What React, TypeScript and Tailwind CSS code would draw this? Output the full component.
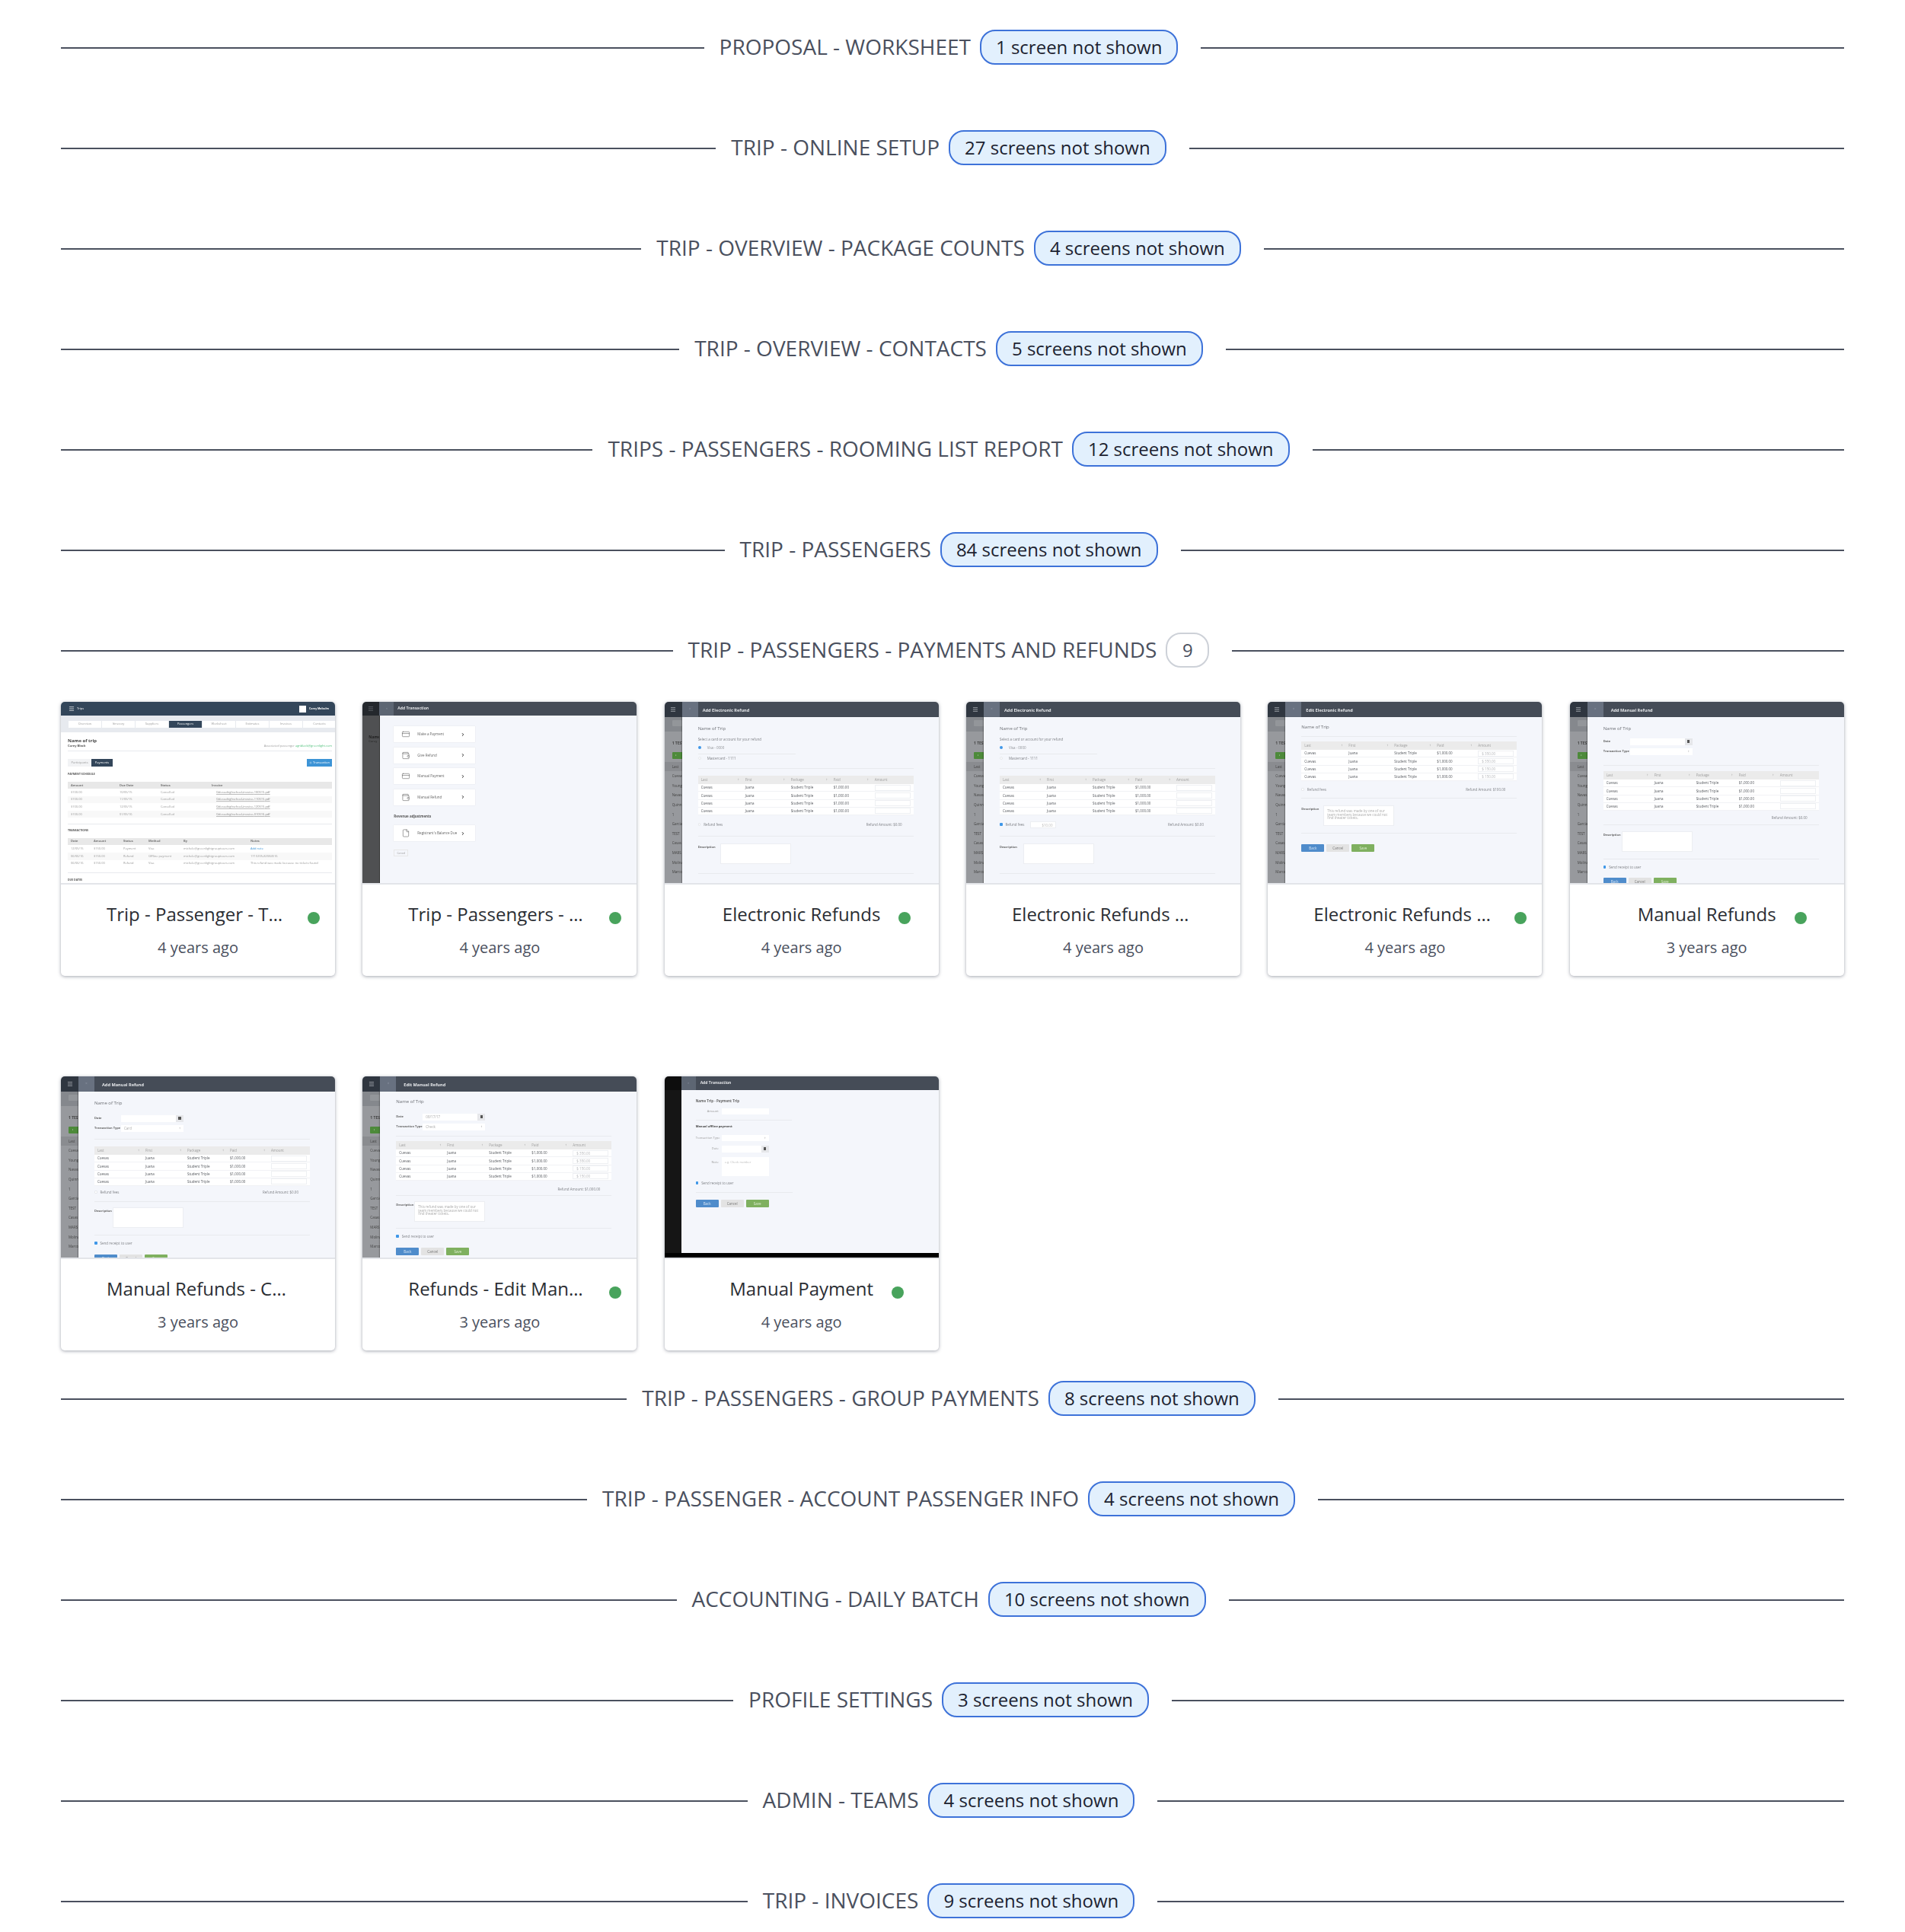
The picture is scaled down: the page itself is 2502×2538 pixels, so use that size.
import type { ReactNode } from "react";
import { ChevronRight, CreditCard, File, Menu, Plus, Wallet } from "lucide-react";

const sidebarNames = ["Cuevas", "Young", "Navas", "Quinn", "1", "Garcia", "TEST", "Casas", "MARS", "Molina", "Marco"];

const electronicCols = "grid-cols-[58px_60px_56px_54px_55px]";
const manualCols = "grid-cols-[63px_55px_56px_54px_55px]";

function Section({ title, count }: { title: string; count: number | string }) {
  const isHidden = typeof count === "string";
  return (
    <div className="flex items-center">
      <div className="mt-0.5 h-0.5 flex-1 bg-[#4a505e]" />
      <h2 className="ml-5 pb-0.5 text-[28px] leading-[44px] text-[#4a505e]">{title}</h2>
      <span
        className={
          isHidden
            ? "ml-3 mr-[30px] flex h-[46px] items-center rounded-[20px] border-2 border-[#3d72d9] bg-[#e2f0fd] px-[19px] text-[24px] text-[#1c2230]"
            : "ml-3 mr-[30px] flex h-[46px] w-[57px] items-center justify-center rounded-[20px] border-2 border-[#cdd1d8] bg-white text-[24px] text-[#4a505e]"
        }
      >
        {count}
      </span>
      <div className="mt-0.5 h-0.5 flex-1 bg-[#4a505e]" />
    </div>
  );
}

function Hr({ className = "" }: { className?: string }) {
  return <div className={`h-px bg-[#e8eaee] ${className}`} />;
}

function Shell({ title, titleClass, children }: { title: string; titleClass: string; children: ReactNode }) {
  return (
    <div className="flex h-[240px] flex-col blur-[0.6px]">
      <div className="flex h-5 shrink-0 items-center bg-[#454c57]">
        <div className="flex h-full w-[23px] shrink-0 items-center justify-center bg-[#2f3640]">
          <Menu className="h-2 w-2 text-[#c9ccd1]" />
        </div>
        <div className="flex h-full w-[21px] shrink-0 items-center justify-center bg-[#687180] text-[5px] text-[#8e96a3]">×</div>
        <span className={`pt-0.5 text-[5.6px] font-bold text-[#e6e8eb] ${titleClass}`}>{title}</span>
      </div>
      <div className="flex min-h-0 flex-1">
        <div className="w-[23px] shrink-0 overflow-hidden whitespace-nowrap bg-[#97999d] text-[4.5px] leading-[12.6px] text-[#454545]">
          <div className="mb-[9px] h-[19px] bg-[#85888d] pl-2.5 pt-1">
            <div className="h-2 w-full rounded-[1px] bg-[#93969a]" />
          </div>
          <div className="pl-2.5 text-[5px] font-bold">1 TEST</div>
          <div className="ml-2.5 mt-[5px] flex h-[9px] w-8 items-center rounded-[1px] bg-[#4d8a3a] pl-1 text-[4px] text-white">+</div>
          <div className="mt-1 bg-[#8a8c90] pl-2.5">Last</div>
          {sidebarNames.map((name) => (
            <div key={name} className="pl-2.5">
              {name}
            </div>
          ))}
        </div>
        <div className="min-w-0 flex-1 overflow-hidden bg-[#f4f6fb] pl-[21px] shadow-[-1px_0_1px_rgba(0,0,0,0.25)]">
          <div className="w-[283px]">{children}</div>
        </div>
      </div>
    </div>
  );
}

function TripName({ className = "" }: { className?: string }) {
  return <div className={`h-2 text-[6px] leading-2 text-[#6d7076] ${className}`}>Name of Trip</div>;
}

function RefundTable({ cols, amounts, className = "" }: { cols: string; amounts?: string[]; className?: string }) {
  return (
    <div className={`text-[4.5px] text-[#55585e] ${className}`}>
      <div className={`grid h-[11px] items-center bg-[#ebebeb] text-[#a0a0a0] ${cols}`}>
        {["Last", "First", "Package", "Paid"].map((col) => (
          <div key={col} className="flex justify-between px-1">
            {col}
            <span className="text-[4px] text-[#888]">↕</span>
          </div>
        ))}
        <div className="px-1">Amount</div>
      </div>
      {[0, 1, 2, 3].map((i) => (
        <div key={i} className={`grid h-[10.25px] items-center border-b border-[#f1f2f5] bg-white ${cols}`}>
          <div className="pl-1">Cuevas</div>
          <div className="pl-1">Juana</div>
          <div className="pl-1">Student Triple</div>
          <div className="pl-1">$1,000.00</div>
          <div className="pl-1 pr-1">
            <div className="h-[8px] border border-[#eef0f3] bg-white pl-1 leading-[6px] text-[#b5b7bb]">{amounts?.[i]}</div>
          </div>
        </div>
      ))}
    </div>
  );
}

function Check({ on = true }: { on?: boolean }) {
  return <div className={`h-[3.5px] w-[3.5px] shrink-0 rounded-[1px] ${on ? "bg-[#3f97e8]" : "border border-[#e7e9ed] bg-white"}`} />;
}

function Buttons({ className = "" }: { className?: string }) {
  return (
    <div className={`flex h-2.5 gap-[3px] text-[4.5px] leading-2.5 ${className}`}>
      <div className="w-[30px] rounded-[1px] bg-[#4f8ccb] text-center text-[#d5e4f4]">Back</div>
      <div className="w-[30px] rounded-[1px] bg-[#e3e3e3] text-center text-[#777]">Cancel</div>
      <div className="w-[30px] rounded-[1px] bg-[#7fb05f] text-center text-[#dcebd0]">Save</div>
    </div>
  );
}

function Description({ text, offset, className = "" }: { text?: string; offset: string; className?: string }) {
  return (
    <div className={`flex text-[4.5px] leading-[5px] ${className}`}>
      <div className={`${offset} shrink-0 whitespace-nowrap pt-0.5 text-[4px] font-bold text-[#666]`}>Description</div>
      <div className="h-[27px] w-[93px] border border-[#eceef2] bg-white px-1 pt-1 leading-[4.5px] text-[#aaa]">{text}</div>
    </div>
  );
}

function DateType({ date, type, className = "" }: { date?: string; type?: string; className?: string }) {
  return (
    <div className={`flex flex-col gap-1 text-[4.5px] ${className}`}>
      <div className="flex h-[9px] items-center">
        <div className="w-[35px] text-[4px] font-bold text-[#666]">Date</div>
        <div className="h-full w-[72px] bg-white pl-1 leading-[9px] text-[#aaa]">{date}</div>
        <div className="flex h-full w-2.5 items-center justify-center bg-[#e6e7ea]">
          <div className="h-[3.5px] w-[3.5px] bg-[#555]" />
        </div>
      </div>
      <div className="flex h-[9px] items-center">
        <div className="w-[35px] whitespace-nowrap text-[4px] font-bold text-[#666]">Transaction Type</div>
        <div className="flex h-full w-[82px] items-center justify-between bg-white px-1 text-[#aaa]">
          <span>{type}</span>
          <span className="text-[4px] text-[#777]">↕</span>
        </div>
      </div>
    </div>
  );
}

function Line({ children, right, className = "" }: { children?: ReactNode; right: string; className?: string }) {
  return (
    <div className={`flex h-1.5 items-center justify-between pr-[15px] text-[4.5px] text-[#808388] ${className}`}>
      <div className="flex items-center gap-1">{children}</div>
      <span>{right}</span>
    </div>
  );
}

function Receipt({ className = "" }: { className?: string }) {
  return (
    <div className={`flex h-1.5 items-center gap-1 text-[4.5px] text-[#808388] ${className}`}>
      <Check />
      Send receipt to user
    </div>
  );
}

function ElectronicAdd({ fees }: { fees: boolean }) {
  return (
    <Shell title="Add Electronic Refund" titleClass="ml-1.5">
      <TripName className="mt-[11px]" />
      <div className="mt-[7px] h-1.5 text-[4.5px] leading-1.5 text-[#808388]">Select a card or account for your refund</div>
      <div className="mt-[5px] flex h-1.5 items-center gap-2 text-[4.5px] text-[#909398]">
        <div className="h-1 w-1 rounded-full bg-[#3f97e8]" />
        Visa - 0000
      </div>
      <Hr className="mt-[5px] w-32" />
      <div className="mt-0.5 flex h-1.5 items-center gap-2 text-[4.5px] text-[#808388]">
        <div className="h-1 w-1 rounded-full border border-[#e7e9ed] bg-white" />
        Mastercard - 1111
      </div>
      <Hr className="mt-2.5" />
      <RefundTable cols={electronicCols} className="mt-[9px]" />
      <Line right="Refund Amount: $0.00" className="mt-[9px]">
        <Check on={fees} />
        Refund fees
        {fees && <div className="ml-1 h-[9px] w-[34px] border border-[#eceef2] bg-white pr-1 text-right leading-[8px] text-[#bbb]">$10.00</div>}
      </Line>
      <Hr className="mt-3" />
      <Description className="mt-[9px]" offset={fees ? "w-[31px]" : "w-[29px]"} />
      <Hr className="mt-3" />
      <Buttons className="mt-3" />
    </Shell>
  );
}

function ElectronicEdit() {
  return (
    <Shell title="Edit Electronic Refund" titleClass="ml-1.5">
      <TripName className="mt-[9px]" />
      <Hr className="mt-2" />
      <RefundTable cols={electronicCols} className="mt-1.5" amounts={["$ 350.00", "$ 350.00", "$ 150.00", "$ 150.00"]} />
      <Line right="Refund Amount: $100.00" className="mt-2">
        <Check on={false} />
        Refund fees
      </Line>
      <Hr className="mt-2" />
      <Description
        className="mt-[9px]"
        offset="w-[29px]"
        text="This refund was made by one of our team members because we could not find theater tickets."
      />
      <Hr className="mt-[9px]" />
      <Buttons className="mt-3.5" />
    </Shell>
  );
}

function ManualAdd() {
  return (
    <Shell title="Add Manual Refund" titleClass="ml-2.5">
      <TripName className="mt-[11px]" />
      <DateType className="mt-[8.5px]" />
      <Hr className="mt-[13.5px]" />
      <RefundTable cols={manualCols} className="mt-[7px]" />
      <Line right="Refund Amount: $0.00" className="mt-1.5" />
      <Hr className="mt-1.5" />
      <Description className="mt-2" offset="w-6" />
      <Hr className="mt-[9px]" />
      <Receipt className="mt-[7px]" />
      <Buttons className="mt-[11px]" />
    </Shell>
  );
}

function ManualCard() {
  return (
    <Shell title="Add Manual Refund" titleClass="ml-2.5">
      <TripName className="mt-[11px]" />
      <DateType className="mt-[11.5px]" type="Card" />
      <Hr className="mt-[9.5px]" />
      <RefundTable cols={manualCols} className="mt-[9px]" />
      <Line right="Refund Amount: $0.00" className="mt-[5px]">
        <Check on={false} />
        Refund fees
      </Line>
      <Hr className="mt-[9px]" />
      <Description className="mt-[7px]" offset="w-6" />
      <Hr className="mt-[9px]" />
      <Receipt className="mt-[7px]" />
      <Buttons className="mt-3" />
    </Shell>
  );
}

function ManualEdit() {
  return (
    <Shell title="Edit Manual Refund" titleClass="ml-2.5">
      <TripName className="mt-[9px]" />
      <DateType className="mt-[11.5px]" date="08/17/17" type="Check" />
      <Hr className="mt-[7.5px]" />
      <RefundTable cols={manualCols} className="mt-1.5" amounts={["$ 350.00", "$ 350.00", "$ 150.00", "$ 150.00"]} />
      <Line right="Refund Amount: $1,000.00" className="mt-2" />
      <Hr className="mt-[5px]" />
      <Description
        className="mt-[7px]"
        offset="w-6"
        text="This refund was made by one of our team members because we could not find theater tickets."
      />
      <Hr className="mt-2" />
      <Receipt className="mt-[7px]" />
      <Buttons className="mt-3" />
    </Shell>
  );
}

const transactionRows = [
  { icon: CreditCard, label: "Make a Payment" },
  { icon: Wallet, label: "Give Refund" },
  { icon: CreditCard, label: "Manual Payment" },
  { icon: Wallet, label: "Manual Refund" },
];

function TransactionRow({ icon: Icon, label }: { icon: typeof File; label: string }) {
  return (
    <div className="flex h-[21px] w-[107px] items-center bg-white pl-[9px] text-[4.5px] text-[#666] shadow-[0_0_1px_rgba(0,0,0,0.15)]">
      <Icon className="h-[11px] w-[14px] text-[#555]" strokeWidth={1.2} />
      <span className="ml-2 w-[57px] whitespace-nowrap">{label}</span>
      <ChevronRight className="h-1.5 w-1.5 text-[#333]" strokeWidth={4} />
    </div>
  );
}

function AddTransaction() {
  return (
    <div className="flex h-full flex-col blur-[0.5px]">
      <div className="flex h-[18px] shrink-0 items-center bg-[#454c57]">
        <div className="flex h-full w-[22px] items-center justify-center bg-[#24282d]">
          <Menu className="h-2 w-2 text-[#70747a]" />
        </div>
        <div className="flex h-full w-[19px] items-center justify-center bg-[#5d6673] text-[4px] text-[#8e96a3]">×</div>
        <span className="ml-[5px] text-[5px] font-bold text-[#e0e2e5]">Add Transaction</span>
      </div>
      <div className="flex min-h-0 flex-1">
        <div className="w-[23px] shrink-0 overflow-hidden whitespace-nowrap border-r border-[#333] bg-[#4f5052] pl-2 pt-[26px] text-[4px] leading-[5px] text-[#222]">
          <div className="text-[5px] font-bold">Name</div>
          <div>Corey</div>
        </div>
        <div className="flex-1 bg-[#f4f6fb] pl-[18px] pt-3.5">
          <div className="flex flex-col gap-[6.5px]">
            {transactionRows.map((row) => (
              <TransactionRow key={row.label} {...row} />
            ))}
          </div>
          <div className="mt-[11.5px] h-1.5 text-[4.5px] leading-1.5 font-bold text-[#555]">Revenue adjustments</div>
          <div className="mt-[9px]">
            <TransactionRow icon={File} label="Registrant's Balance Due" />
          </div>
          <div className="mt-[11px] flex h-[8.5px] w-[19px] items-center justify-center border border-[#e8e8e8] text-[3.5px] text-[#999]">Cancel</div>
        </div>
      </div>
    </div>
  );
}

function ManualPayment() {
  const label = "w-[34px] pr-1 text-right text-[#999]";
  return (
    <div className="flex h-full flex-col bg-black blur-[0.5px]">
      <div className="flex h-[18px] shrink-0 items-center bg-[#454c57]">
        <div className="h-full w-[22px] bg-[#0d0d0d]" />
        <div className="flex h-full w-[19px] items-center justify-center bg-[#5d6673] text-[4px] text-[#8e96a3]">×</div>
        <span className="ml-1.5 text-[5px] font-bold text-[#e0e2e5]">Add Transaction</span>
      </div>
      <div className="flex h-[214px] shrink-0">
        <div className="w-[22px] shrink-0 bg-[#151515]" />
        <div className="flex-1 bg-[#f4f6fb] pl-[19px] pt-[11px] text-[4px]">
          <div className="h-1.5 text-[4.5px] leading-1.5 font-bold text-[#666]">Name Trip - Payment Trip</div>
          <div className="mt-[7px] flex h-2 items-center">
            <div className={label}>Amount</div>
            <div className="h-full w-[62px] bg-white" />
          </div>
          <Hr className="mt-[7px] w-[126px]" />
          <div className="mt-[5px] h-1.5 leading-1.5 font-bold text-[#444]">Manual offline payment</div>
          <div className="mt-2 flex h-2 items-center">
            <div className={`${label} whitespace-nowrap`}>Transaction Type</div>
            <div className="flex h-full w-[62px] items-center justify-end bg-white pr-1 text-[#777]">↕</div>
          </div>
          <div className="mt-[5.5px] flex h-[9px] items-center">
            <div className={label}>Date</div>
            <div className="h-full w-[52px] bg-white" />
            <div className="flex h-full w-2.5 items-center justify-center bg-[#e6e7ea]">
              <div className="h-[3.5px] w-[3.5px] bg-[#555]" />
            </div>
          </div>
          <div className="mt-[6.5px] flex">
            <div className={`${label} pt-1`}>Note</div>
            <div className="h-[25px] w-[62px] bg-white px-1 pt-1 text-[#bbb]">e.g. Check number</div>
          </div>
          <Receipt className="mt-1.5" />
          <Hr className="mt-[9px] w-[127px]" />
          <Buttons className="mt-[9px]" />
        </div>
      </div>
    </div>
  );
}

function OverviewThumb() {
  const tabs = ["Overview", "Itinerary", "Suppliers", "Passengers", "Worksheet", "Estimates", "Invoices", "Contacts"];
  const schedule = "grid grid-cols-[64px_54px_67px_1fr]";
  const payments = "grid grid-cols-[30px_39px_33px_46px_88px_1fr]";
  return (
    <div className="h-full bg-white text-[4px] text-[#9a9a9a] blur-[0.7px]">
      <div className="flex h-[18px] items-center bg-[#33465a] text-white">
        <Menu className="ml-2.5 h-2 w-2" />
        <span className="ml-[3px] text-[4px]">Trips</span>
        <div className="ml-auto h-[9px] w-[9px] bg-white" />
        <span className="ml-1 mr-2 text-[3.5px] font-bold">Corey Malcolm</span>
      </div>
      <div className="flex h-[22px] items-center gap-px overflow-hidden bg-[#e7eaef] pl-2.5">
        {tabs.map((tab) => (
          <div
            key={tab}
            className={`flex h-[9px] w-[43px] shrink-0 items-center justify-center ${tab === "Passengers" ? "bg-[#33465a] text-white" : "bg-white"}`}
          >
            {tab}
          </div>
        ))}
      </div>
      <div className="pl-[9px] pr-1">
        <div className="mt-[7px] text-[6px] leading-2 font-bold text-[#444]">Name of trip</div>
        <div className="flex h-1.5 items-center justify-between text-[4px]">
          <span className="font-bold text-[#555]">Corey Black</span>
          <span>
            Associated passenger <span className="text-[#4ec07a]">agnblack@greenlight.com</span>
          </span>
        </div>
        <Hr className="mt-[3px]" />
        <div className="mt-2.5 flex h-2.5 items-center justify-between">
          <div className="flex h-full">
            <div className="flex w-[31px] items-center justify-center bg-[#f2f3f5]">Participants</div>
            <div className="flex w-7 items-center justify-center bg-[#33465a] text-white">Payments</div>
          </div>
          <div className="flex h-full w-[33px] items-center justify-center gap-px bg-[#3d94d6] text-white">
            <Plus className="h-1 w-1" />
            Transaction
          </div>
        </div>
        <div className="mt-2 text-[3.5px] leading-1 font-bold text-[#555]">PAYMENT SCHEDULE</div>
        <div className={`${schedule} mt-2 h-[9px] items-center bg-[#e8e8e8] pl-1 font-bold text-[#777]`}>
          <span>Amount</span>
          <span>Due Date</span>
          <span>Status</span>
          <span>Invoice</span>
        </div>
        {["10/05/15", "11/05/15", "12/05/15", "01/05/16"].map((due, i) => (
          <div key={due} className={`${schedule} h-[9.6px] items-center pl-1 ${i % 2 ? "bg-[#f8f8f8]" : ""}`}>
            <span>$100.00</span>
            <span>{due}</span>
            <span>Cancelled</span>
            <span className="pl-1.5 text-[#888] underline decoration-[#bbb]">Odessahighschool-invoice-{due.replace(/\//g, "")}.pdf</span>
          </div>
        ))}
        <Hr className="mt-[7.6px]" />
        <div className="mt-1.5 text-[3.5px] leading-1 font-bold text-[#555]">TRANSACTIONS</div>
        <div className={`${payments} mt-2 h-[9px] items-center bg-[#e8e8e8] pl-1 font-bold text-[#777]`}>
          <span>Date</span>
          <span>Amount</span>
          <span>Status</span>
          <span>Method</span>
          <span>By</span>
          <span>Notes</span>
        </div>
        {[
          ["12/05/15", "Payment", "Visa", "Add note"],
          ["06/06/16", "Refund", "Offline payment", "1713205-82084516"],
          ["06/06/16", "Refund", "Visa", "This refund was made because no tickets found"],
        ].map(([date, status, method, notes], i) => (
          <div key={i} className={`${payments} h-[9.8px] items-center whitespace-nowrap pl-1 ${i === 1 ? "bg-[#f8f8f8]" : ""}`}>
            <span>{date}</span>
            <span>$150.00</span>
            <span>{status}</span>
            <span>{method}</span>
            <span>michele@greenlightgrouptours.com</span>
            <span className={i === 0 ? "text-[#3d94d6]" : ""}>{notes}</span>
          </div>
        ))}
        <Hr className="mt-[6.6px]" />
        <div className="mt-[7px] text-[3.5px] leading-1 font-bold text-[#555]">DUE DATES</div>
      </div>
    </div>
  );
}

function Card({ thumb, title, age, dot = true }: { thumb: ReactNode; title: string; age: string; dot?: boolean }) {
  return (
    <div className="h-[360px] w-[360px] overflow-hidden rounded-[5px] bg-white shadow-[0_1px_4px_rgba(70,78,95,0.5)]">
      <div className="relative h-60 overflow-hidden">
        {thumb}
        <div className="absolute inset-x-0 bottom-0 h-0.5 bg-[#e3e5e9]" />
      </div>
      <div className="flex justify-center pt-[21px]">
        <div className="relative max-w-60">
          <div className="truncate text-[24px] leading-[36px] text-[#2a2d33]">{title}</div>
          {dot && <div className="absolute -right-10 top-[15px] h-4 w-4 rounded-full bg-[#48a35c]" />}
        </div>
      </div>
      <div className="mt-[11px] text-center text-[20px] leading-[30px] text-[#4a505e]">{age}</div>
    </div>
  );
}

const before = [
  { title: "PROPOSAL - WORKSHEET", count: "1 screen not shown" },
  { title: "TRIP - ONLINE SETUP", count: "27 screens not shown" },
  { title: "TRIP - OVERVIEW - PACKAGE COUNTS", count: "4 screens not shown" },
  { title: "TRIP - OVERVIEW - CONTACTS", count: "5 screens not shown" },
  { title: "TRIPS - PASSENGERS - ROOMING LIST REPORT", count: "12 screens not shown" },
  { title: "TRIP - PASSENGERS", count: "84 screens not shown" },
];

const after = [
  { title: "TRIP - PASSENGERS - GROUP PAYMENTS", count: "8 screens not shown" },
  { title: "TRIP - PASSENGER - ACCOUNT PASSENGER INFO", count: "4 screens not shown" },
  { title: "ACCOUNTING - DAILY BATCH", count: "10 screens not shown" },
  { title: "PROFILE SETTINGS", count: "3 screens not shown" },
  { title: "ADMIN - TEAMS", count: "4 screens not shown" },
  { title: "TRIP - INVOICES", count: "9 screens not shown" },
];

const cards = [
  { thumb: <OverviewThumb />, title: "Trip - Passenger - Trip Payments", age: "4 years ago" },
  { thumb: <AddTransaction />, title: "Trip - Passengers - Add Transaction", age: "4 years ago" },
  { thumb: <ElectronicAdd fees={false} />, title: "Electronic Refunds", age: "4 years ago" },
  { thumb: <ElectronicAdd fees />, title: "Electronic Refunds - Fees", age: "4 years ago", dot: false },
  { thumb: <ElectronicEdit />, title: "Electronic Refunds - Edit", age: "4 years ago" },
  { thumb: <ManualAdd />, title: "Manual Refunds", age: "3 years ago" },
  { thumb: <ManualCard />, title: "Manual Refunds - Card", age: "3 years ago", dot: false },
  { thumb: <ManualEdit />, title: "Refunds - Edit Manual Refund", age: "3 years ago" },
  { thumb: <ManualPayment />, title: "Manual Payment", age: "4 years ago" },
];

export default function App() {
  return (
    <div className="min-h-screen overflow-hidden bg-white px-20 pt-[39px] font-['Open_Sans',sans-serif]">
      <div className="flex flex-col gap-[86px]">
        {before.map((s) => (
          <Section key={s.title} {...s} />
        ))}
        <div>
          <Section title="TRIP - PASSENGERS - PAYMENTS AND REFUNDS" count={9} />
          <div className="mt-[45px] grid grid-cols-6 gap-x-9 gap-y-[132px]">
            {cards.map((c) => (
              <Card key={c.title} {...c} />
            ))}
          </div>
        </div>
      </div>
      <div className="mt-10 flex flex-col gap-[86px]">
        {after.map((s) => (
          <Section key={s.title} {...s} />
        ))}
      </div>
    </div>
  );
}
